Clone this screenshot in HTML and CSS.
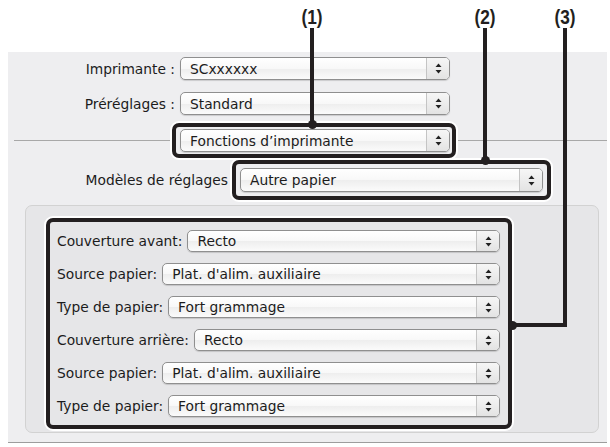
FILE: index.html
```html
<!DOCTYPE html>
<html lang="fr">
<head>
  <meta charset="UTF-8" />
  <title>Fonctions d'imprimante</title>
  <link rel="stylesheet" href="styles.css">
</head>
<body>
  <div class="figure">

    <div class="dialog">
      <div class="field">
        <span class="lbl">Imprimante :</span>
        <div class="popup"><span class="val">SCxxxxxx</span><span class="step"><svg width="7" height="11" viewBox="0 0 7 11"><polygon points="3.5,0.5 6.5,4 0.5,4"/><polygon points="0.5,7 6.5,7 3.5,10.5"/></svg></span></div>
      </div>
      <div class="field last">
        <span class="lbl">Préréglages :</span>
        <div class="popup"><span class="val">Standard</span><span class="step"><svg width="7" height="11" viewBox="0 0 7 11"><polygon points="3.5,0.5 6.5,4 0.5,4"/><polygon points="0.5,7 6.5,7 3.5,10.5"/></svg></span></div>
      </div>

      <div class="sep-row">
        <div class="mark mark1">
          <div class="popup wide"><span class="val">Fonctions d’imprimante</span><span class="step"><svg width="7" height="11" viewBox="0 0 7 11"><polygon points="3.5,0.5 6.5,4 0.5,4"/><polygon points="0.5,7 6.5,7 3.5,10.5"/></svg></span></div>
        </div>
      </div>

      <div class="model-row">
        <span class="lbl">Modèles de réglages</span>
        <div class="mark mark2">
          <div class="popup tall"><span class="val">Autre papier</span><span class="step"><svg width="7" height="11" viewBox="0 0 7 11"><polygon points="3.5,0.5 6.5,4 0.5,4"/><polygon points="0.5,7 6.5,7 3.5,10.5"/></svg></span></div>
        </div>
      </div>

      <div class="panel">
        <div class="mark mark3">
          <div class="row">
            <span class="rlbl">Couverture avant:</span>
            <div class="popup"><span class="val">Recto</span><span class="step"><svg width="7" height="11" viewBox="0 0 7 11"><polygon points="3.5,0.5 6.5,4 0.5,4"/><polygon points="0.5,7 6.5,7 3.5,10.5"/></svg></span></div>
          </div>
          <div class="row">
            <span class="rlbl">Source papier:</span>
            <div class="popup"><span class="val">Plat. d'alim. auxiliaire</span><span class="step"><svg width="7" height="11" viewBox="0 0 7 11"><polygon points="3.5,0.5 6.5,4 0.5,4"/><polygon points="0.5,7 6.5,7 3.5,10.5"/></svg></span></div>
          </div>
          <div class="row">
            <span class="rlbl">Type de papier:</span>
            <div class="popup"><span class="val">Fort grammage</span><span class="step"><svg width="7" height="11" viewBox="0 0 7 11"><polygon points="3.5,0.5 6.5,4 0.5,4"/><polygon points="0.5,7 6.5,7 3.5,10.5"/></svg></span></div>
          </div>
          <div class="row">
            <span class="rlbl">Couverture arrière:</span>
            <div class="popup"><span class="val">Recto</span><span class="step"><svg width="7" height="11" viewBox="0 0 7 11"><polygon points="3.5,0.5 6.5,4 0.5,4"/><polygon points="0.5,7 6.5,7 3.5,10.5"/></svg></span></div>
          </div>
          <div class="row">
            <span class="rlbl">Source papier:</span>
            <div class="popup"><span class="val">Plat. d'alim. auxiliaire</span><span class="step"><svg width="7" height="11" viewBox="0 0 7 11"><polygon points="3.5,0.5 6.5,4 0.5,4"/><polygon points="0.5,7 6.5,7 3.5,10.5"/></svg></span></div>
          </div>
          <div class="row">
            <span class="rlbl">Type de papier:</span>
            <div class="popup"><span class="val">Fort grammage</span><span class="step"><svg width="7" height="11" viewBox="0 0 7 11"><polygon points="3.5,0.5 6.5,4 0.5,4"/><polygon points="0.5,7 6.5,7 3.5,10.5"/></svg></span></div>
          </div>
        </div>
      </div>
    </div>

    <!-- callouts drawn over the screenshot -->
    <span class="num n1">(1)</span>
    <span class="num n2">(2)</span>
    <span class="num n3">(3)</span>
    <div class="lead l1"></div>
    <div class="lead l2"></div>
    <div class="lead l3"></div>
    <div class="lead l3h"></div>
    <div class="dot d1"></div>
    <div class="dot d2"></div>
    <div class="dot d3"></div>
  </div>
</body>
</html>
```
FILE: styles.css
```css
body {
  margin: 0;
  background: #fff;
  font-family: "DejaVu Sans", sans-serif;
  font-size: 13.8px;
  color: #1c1c1c;
}
.figure {
  position: relative;
  width: 610px;
  height: 447px;
  padding-top: 52px;
  box-sizing: border-box;
  overflow: hidden;
}
.dialog {
  margin: 0 3px 0 8px;
  background: #eeeef0;
  border-bottom: 1px solid #9d9d9d;
  padding: 5px 0 9px;
}
.field {
  display: grid;
  grid-template-columns: 172px 270px;
  align-items: center;
  margin-bottom: 12px;
}
.field.last {
  margin-bottom: 8px;
}
.lbl {
  text-align: right;
  padding-right: 5px;
  white-space: nowrap;
}

/* aqua popup button */
.popup {
  height: 23px;
  box-sizing: border-box;
  display: flex;
  align-items: center;
  border: 1px solid #8f8f8f;
  border-radius: 5px;
  background: linear-gradient(#fff, #f8f8f8 50%, #eeeeee 52%, #fbfbfb);
  box-shadow: 0 1px 1px rgba(0,0,0,0.15);
}
.popup .val {
  flex: 1;
  padding-left: 9px;
  white-space: nowrap;
}
.popup .step {
  width: 22px;
  align-self: stretch;
  display: flex;
  align-items: center;
  justify-content: center;
  border-left: 1px solid #c4c4c4;
  border-radius: 0 4px 4px 0;
  background: linear-gradient(#f6f6f6, #e3e3e3);
}
.step svg {
  fill: #222;
}
.popup.wide {
  width: 270px;
}
.popup.tall {
  width: 303px;
  height: 24px;
}

/* thick black outlines marking the callouts */
.mark {
  border: 4px solid #231f20;
  border-radius: 7px;
  box-shadow: 0 0 0 2px #fff;
  background: #eeeef0;
}
.sep-row {
  padding-left: 164px;
  background: linear-gradient(#a8a8a8, #a8a8a8) no-repeat 6px 50% / calc(100% - 6px) 1px;
}
.mark1 {
  width: fit-content;
  padding: 2px 2px 2px 4px;
}
.model-row {
  display: grid;
  grid-template-columns: 220px auto;
  column-gap: 4px;
  align-items: center;
  justify-content: start;
  margin-top: 2px;
}
.model-row .lbl {
  padding-right: 0;
}
.mark2 {
  padding: 4px;
}
.panel {
  margin: 5px 8px 0 17px;
  border: 1px solid #d2d2d2;
  border-radius: 7px;
  background: #e6e6e8;
  padding: 12px 0 3px 20px;
}
.mark3 {
  width: 466px;
  box-sizing: border-box;
  padding: 8px 8px 8px 7px;
  background: #e6e6e8;
  display: flex;
  flex-direction: column;
  gap: 11px;
}
.row {
  display: flex;
  align-items: center;
  height: 22px;
}
.row .popup {
  flex: 1;
  height: 22px;
  margin-left: 5px;
}
.rlbl {
  white-space: nowrap;
}

/* callout labels and leaders */
.num {
  position: absolute;
  top: 5px;
  transform: translateX(-50%) scaleX(0.82);
  font-family: "Liberation Sans", sans-serif;
  font-weight: bold;
  font-size: 21px;
  color: #231f20;
}
.n1 { left: 312px; }
.n2 { left: 485px; }
.n3 { left: 565px; }
.lead {
  position: absolute;
  background: #231f20;
}
.l1 { left: 310px; top: 28px; width: 4px; height: 96px; }
.l2 { left: 483px; top: 28px; width: 4px; height: 132px; }
.l3 { left: 563px; top: 28px; width: 4px; height: 299px; }
.l3h { left: 512px; top: 323px; width: 55px; height: 4px; }
.dot {
  position: absolute;
  width: 9px;
  height: 9px;
  border-radius: 50%;
  background: #231f20;
}
.d1 { left: 308px; top: 120px; }
.d2 { left: 481px; top: 156px; }
.d3 { left: 508px; top: 321px; }
```
